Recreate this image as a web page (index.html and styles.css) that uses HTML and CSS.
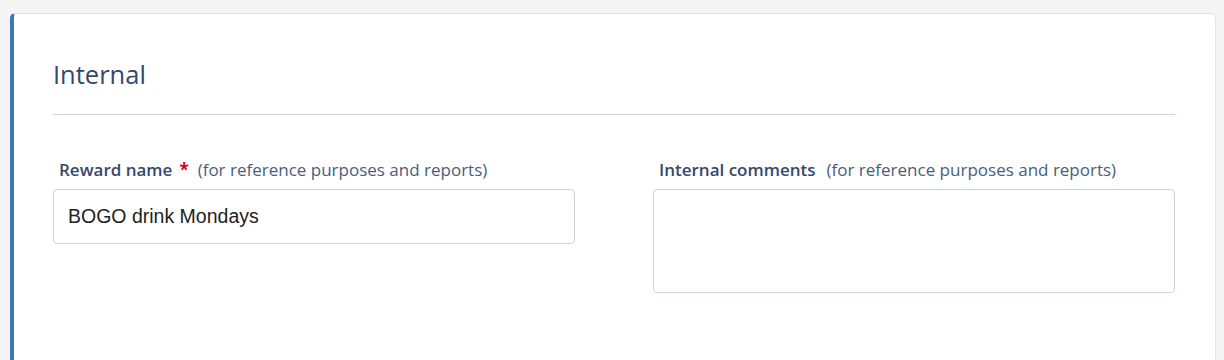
FILE: index.html
```html
<!DOCTYPE html>
<html>
<head>
<meta charset="utf-8">
<link rel="stylesheet" href="styles.css">
</head>
<body>
<div class="card">
  <h2 class="title">Internal</h2>
  <div class="divider"></div>
  <div class="fields">
    <div class="field">
      <label class="label"><span class="name">Reward name</span><span class="req">*</span><span class="hint">(for reference purposes and reports)</span></label>
      <div class="input">BOGO drink Mondays</div>
    </div>
    <div class="field">
      <label class="label"><span class="name">Internal comments</span><span class="hint hint-r">(for reference purposes and reports)</span></label>
      <div class="textarea"></div>
    </div>
  </div>
</div>
</body>
</html>
```

FILE: styles.css
```css
html, body { margin: 0; padding: 0; }
body {
  background: #f5f5f5;
  width: 1224px;
  height: 360px;
  overflow: hidden;
  font-family: "Open Sans", "Noto Sans", sans-serif;
}
.card {
  box-sizing: border-box;
  margin: 13px 0 0 10px;
  width: 1206px;
  height: 360px;
  background: #fff;
  border: 1px solid #dfe3ea;
  border-left: 4px solid #3a78ba;
  border-radius: 5px;
  padding: 0 40px 0 39px;
}
.title {
  margin: 0;
  padding-top: 45px;
  font-size: 25.5px;
  font-weight: 400;
  color: #34496b;
  line-height: 30px;
}
.divider {
  margin-top: 25px;
  height: 1px;
  background: #cdd3de;
}
.fields {
  display: grid;
  grid-template-columns: 522px 522px;
  column-gap: 78px;
  margin-top: 44px;
}
.label {
  display: block;
  padding-left: 6px;
  font-size: 17px;
  line-height: 20px;
  color: #34496b;
  margin-top: 1px;
  margin-bottom: 9px;
  white-space: nowrap;
}
.name { font-weight: 600; }
.req { color: #d0021b; font-weight: 700; margin-left: 7px; }
.hint { color: #4a5d7e; margin-left: 9px; }
.hint-r { margin-left: 11px; }
.input, .textarea {
  border: 1px solid #cdd3de;
  border-radius: 4px;
  box-sizing: border-box;
  background: #fff;
}
.input {
  height: 55px;
  padding: 0 14px;
  font-family: "Liberation Sans", Arial, sans-serif;
  font-size: 19.5px;
  color: #222;
  display: flex;
  align-items: center;
}
.textarea { height: 104px; }
```
